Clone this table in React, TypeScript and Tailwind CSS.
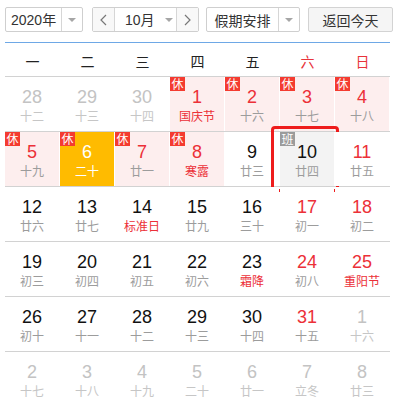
import React from "react";

type Cell = {
  d: number;
  l: string;
  t: "other" | "normal" | "red";
  rest?: boolean;
  redL?: boolean;
  sel?: boolean;
  today?: boolean;
  work?: boolean;
};

const rows: Cell[][] = [
  [
    { d: 28, l: "十二", t: "other" },
    { d: 29, l: "十三", t: "other" },
    { d: 30, l: "十四", t: "other" },
    { d: 1, l: "国庆节", t: "red", rest: true, redL: true },
    { d: 2, l: "十六", t: "red", rest: true },
    { d: 3, l: "十七", t: "red", rest: true },
    { d: 4, l: "十八", t: "red", rest: true },
  ],
  [
    { d: 5, l: "十九", t: "red", rest: true },
    { d: 6, l: "二十", t: "red", rest: true, sel: true },
    { d: 7, l: "廿一", t: "red", rest: true },
    { d: 8, l: "寒露", t: "red", rest: true, redL: true },
    { d: 9, l: "廿三", t: "normal" },
    { d: 10, l: "廿四", t: "normal", today: true, work: true },
    { d: 11, l: "廿五", t: "red" },
  ],
  [
    { d: 12, l: "廿六", t: "normal" },
    { d: 13, l: "廿七", t: "normal" },
    { d: 14, l: "标准日", t: "normal", redL: true },
    { d: 15, l: "廿九", t: "normal" },
    { d: 16, l: "三十", t: "normal" },
    { d: 17, l: "初一", t: "red" },
    { d: 18, l: "初二", t: "red" },
  ],
  [
    { d: 19, l: "初三", t: "normal" },
    { d: 20, l: "初四", t: "normal" },
    { d: 21, l: "初五", t: "normal" },
    { d: 22, l: "初六", t: "normal" },
    { d: 23, l: "霜降", t: "normal", redL: true },
    { d: 24, l: "初八", t: "red" },
    { d: 25, l: "重阳节", t: "red", redL: true },
  ],
  [
    { d: 26, l: "初十", t: "normal" },
    { d: 27, l: "十一", t: "normal" },
    { d: 28, l: "十二", t: "normal" },
    { d: 29, l: "十三", t: "normal" },
    { d: 30, l: "十四", t: "normal" },
    { d: 31, l: "十五", t: "red" },
    { d: 1, l: "十六", t: "other" },
  ],
  [
    { d: 2, l: "十七", t: "other" },
    { d: 3, l: "十八", t: "other" },
    { d: 4, l: "十九", t: "other" },
    { d: 5, l: "二十", t: "other" },
    { d: 6, l: "廿一", t: "other" },
    { d: 7, l: "立冬", t: "other" },
    { d: 8, l: "廿三", t: "other" },
  ],
];

const FONT = { fontFamily: '"Liberation Sans", "Noto Sans CJK SC", sans-serif' };
const CJK = { fontFamily: '"Noto Sans CJK SC", "Liberation Sans", sans-serif' };

function Tri() {
  return <span className="block h-0 w-0 border-x-[4px] border-t-[4px] border-x-transparent border-t-[#a6a6a6]" />;
}

function Chevron({ dir }: { dir: "l" | "r" }) {
  return (
    <svg width="7" height="12" viewBox="0 0 7 12">
      <polyline
        points={dir === "l" ? "6,1 1,6 6,11" : "1,1 6,6 1,11"}
        fill="none"
        stroke="#777"
        strokeWidth="1.2"
      />
    </svg>
  );
}

function DayCell({ c }: { c: Cell }) {
  let bg = "bg-white";
  if (c.rest) bg = "bg-[#fdeeee]";
  if (c.sel) bg = "bg-[#ffbb00]";
  if (c.today) bg = "bg-[#f3f3f3]";

  let num = "text-[#111]";
  if (c.t === "other") num = "text-[#c3c3c3]";
  if (c.t === "red") num = "text-[#ec3038]";
  if (c.sel) num = "text-white";

  let lun = "text-[#9c9c9c]";
  if (c.t === "other") lun = "text-[#c6c6c6]";
  if (c.redL) lun = "text-[#ec3038]";
  if (c.sel) lun = "text-white";

  return (
    <div className="relative h-[54px] w-[55px] pr-[1px]">
      <div className={`flex h-full w-full flex-col items-center ${bg}`}>
        <div className={`pt-[10px] text-[18px] leading-[20px] ${num}`} style={FONT}>
          {c.d}
        </div>
        <div className={`text-[12px] leading-[17px] ${lun}`} style={CJK}>
          {c.l}
        </div>
      </div>
      {c.rest && (
        <div
          className="absolute left-0 top-0 h-[14px] w-[15px] bg-[#f43b30] text-center text-[12px] leading-[14px] text-white"
          style={CJK}
        >
          休
        </div>
      )}
      {c.work && (
        <div
          className="absolute left-0 top-0 h-[14px] w-[15px] bg-[#9b9b9b] text-center text-[12px] leading-[14px] text-white"
          style={CJK}
        >
          班
        </div>
      )}
      {c.today && (
        <div className="pointer-events-none absolute left-[-9px] top-[-6px] h-[66px] w-[68px] rounded-[4px] border-[3px] border-[#ee1c1c]" />
      )}
    </div>
  );
}

export default function App() {
  const week = ["一", "二", "三", "四", "五", "六", "日"];
  return (
    <div className="h-[405px] w-[398px] overflow-hidden bg-white text-[14px] text-[#333]" style={FONT}>
      <div className="mt-[7px] flex h-[25px] items-stretch pl-[5px]">
        <div className="flex w-[78px] rounded-[2px] border border-[#cfcfcf] bg-white">
          <div className="flex w-[55px] items-center whitespace-nowrap pl-[5px] leading-none">2020年</div>
          <div className="flex flex-1 items-center justify-center border-l border-[#d6d6d6]">
            <Tri />
          </div>
        </div>
        <div className="ml-[9px] flex w-[107px] rounded-[2px] border border-[#cfcfcf] bg-white">
          <div className="flex w-[21px] shrink-0 items-center justify-center bg-[#f8f8f8]">
            <Chevron dir="l" />
          </div>
          <div className="flex min-w-0 flex-1 items-center whitespace-nowrap border-x border-[#d6d6d6] pl-[10px]">
            <span className="leading-none">10月</span>
            <span className="ml-[10px]">
              <Tri />
            </span>
          </div>
          <div className="flex w-[21px] shrink-0 items-center justify-center bg-[#f8f8f8]">
            <Chevron dir="r" />
          </div>
        </div>
        <div className="ml-[7px] flex w-[94px] rounded-[2px] border border-[#cfcfcf] bg-white">
          <div className="flex w-[71px] items-center justify-center whitespace-nowrap leading-none" style={CJK}>
            假期安排
          </div>
          <div className="flex flex-1 items-center justify-center border-l border-[#d6d6d6]">
            <Tri />
          </div>
        </div>
        <div
          className="ml-[8px] flex w-[85px] items-center justify-center whitespace-nowrap rounded-[2px] border border-[#d3d3d3] bg-[#f5f5f5] leading-none"
          style={CJK}
        >
          返回今天
        </div>
      </div>

      <div className="ml-[5px] mt-[10px] w-[385px]">
        <div className="grid h-[35px] grid-cols-7 items-center border-y border-t-[#6ea8e6] border-b-[#d2d2d2] pt-[3px]">
          {week.map((w, i) => (
            <div
              key={w}
              className={`text-center text-[14px] leading-[20px] ${i >= 5 ? "text-[#e8333a]" : "text-[#222]"}`}
              style={CJK}
            >
              {w}
            </div>
          ))}
        </div>
        {rows.map((r, ri) => (
          <div key={ri} className="grid grid-cols-7 border-b border-[#d2d2d2]">
            {r.map((c, ci) => (
              <DayCell key={ci} c={c} />
            ))}
          </div>
        ))}
      </div>
    </div>
  );
}
